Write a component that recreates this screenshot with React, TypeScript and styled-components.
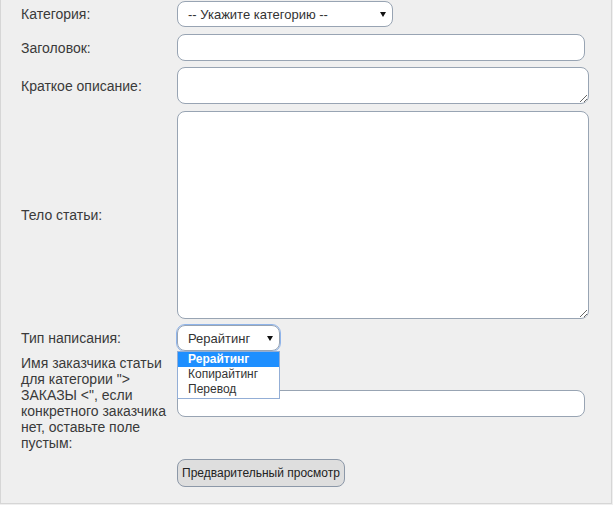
import React from "react";
import styled, { createGlobalStyle } from "styled-components";

const Global = createGlobalStyle`
  html, body { margin: 0; padding: 0; background: #efefef; }
  body { font-family: "Liberation Sans", Arial, sans-serif; }
  * { box-sizing: border-box; }
`;

const Page = styled.div`
  width: 612px;
  height: 504px;
  background: #efefef;
  border-left: 1px solid #d6d6d6;
  border-right: 1px solid #d6d6d6;
  border-bottom: 1px solid #d6d6d6;
  padding: 1px 0 0 20px;
  overflow: hidden;
`;

const Form = styled.form`
  display: flex;
  flex-direction: column;
`;

const Row = styled.div<{ $gap?: number }>`
  display: grid;
  grid-template-columns: 156px 1fr;
  align-items: center;
  margin-top: ${(p) => (p.$gap ?? 0)}px;
`;

const Label = styled.label`
  font-size: 14px;
  line-height: 16px;
  color: #3a3a3a;
  padding-right: 6px;
  max-width: 152px;
`;

const fieldBorder = `
  border: 1px solid #98a4b3;
  border-radius: 8px;
  background: #fff;
`;

const Input = styled.input<{ $w: number }>`
  ${fieldBorder}
  width: ${(p) => p.$w}px;
  height: 27px;
  padding: 0 8px;
  font: 13px "Liberation Sans", Arial, sans-serif;
  outline: none;
`;

const TextArea = styled.textarea<{ $h: number }>`
  ${fieldBorder}
  display: block;
  width: 412px;
  height: ${(p) => p.$h}px;
  padding: 4px 8px;
  font: 13px "Liberation Sans", Arial, sans-serif;
  outline: none;
  resize: vertical;
`;

const SelectWrap = styled.div`
  position: relative;
  justify-self: start;
`;

const SelectBox = styled.div<{ $w: number; $h: number; $focused?: boolean }>`
  ${fieldBorder}
  width: ${(p) => p.$w}px;
  height: ${(p) => p.$h}px;
  display: flex;
  align-items: center;
  justify-content: space-between;
  padding: 0 6px 0 10px;
  font-size: 13px;
  color: #333;
  cursor: default;
  outline: ${(p) => (p.$focused ? "1px solid #8fb4ea" : "none")};
  outline-offset: 0;
`;

const Arrow = () => (
  <svg width="6" height="5" viewBox="0 0 6 5">
    <polygon points="0,0 6,0 3,5" fill="#111" />
  </svg>
);

const DropList = styled.ul`
  position: absolute;
  top: 100%;
  left: 0;
  width: 103px;
  margin: 0;
  padding: 0 0 1px;
  list-style: none;
  background: #fff;
  border: 1px solid #93aed6;
  z-index: 2;
`;

const Option = styled.li<{ $active?: boolean }>`
  height: 15px;
  line-height: 15px;
  padding-left: 10px;
  font-size: 12px;
  color: ${(p) => (p.$active ? "#fff" : "#333")};
  background: ${(p) => (p.$active ? "#1e8fff" : "transparent")};
  font-weight: ${(p) => (p.$active ? 700 : 400)};
`;

const Button = styled.button`
  justify-self: start;
  width: 168px;
  height: 28px;
  border: 1px solid #8c98a8;
  border-radius: 8px;
  background: #dedede;
  font: 12px "Liberation Sans", Arial, sans-serif;
  color: #222;
  padding: 0 4px;
`;

export default function App() {
  return (
    <Page>
      <Global />
      <Form onSubmit={(e) => e.preventDefault()}>
        <Row>
          <Label>Категория:</Label>
          <SelectWrap>
            <SelectBox $w={216} $h={26}>
              <span>-- Укажите категорию --</span>
              <Arrow />
            </SelectBox>
          </SelectWrap>
        </Row>
        <Row $gap={7}>
          <Label>Заголовок:</Label>
          <Input $w={408} />
        </Row>
        <Row $gap={6}>
          <Label>Краткое описание:</Label>
          <TextArea $h={37} />
        </Row>
        <Row $gap={7}>
          <Label>Тело статьи:</Label>
          <TextArea $h={208} />
        </Row>
        <Row $gap={6}>
          <Label>Тип написания:</Label>
          <SelectWrap>
            <SelectBox $w={103} $h={26} $focused>
              <span>Рерайтинг</span>
              <Arrow />
            </SelectBox>
            <DropList>
              <Option $active>Рерайтинг</Option>
              <Option>Копирайтинг</Option>
              <Option>Перевод</Option>
            </DropList>
          </SelectWrap>
        </Row>
        <Row $gap={4}>
          <Label>
            Имя заказчика статьи для категории "&gt; ЗАКАЗЫ &lt;", если конкретного заказчика нет, оставьте поле пустым:
          </Label>
          <Input $w={408} />
        </Row>
        <Row $gap={8}>
          <span />
          <Button type="button">Предварительный просмотр</Button>
        </Row>
      </Form>
    </Page>
  );
}
